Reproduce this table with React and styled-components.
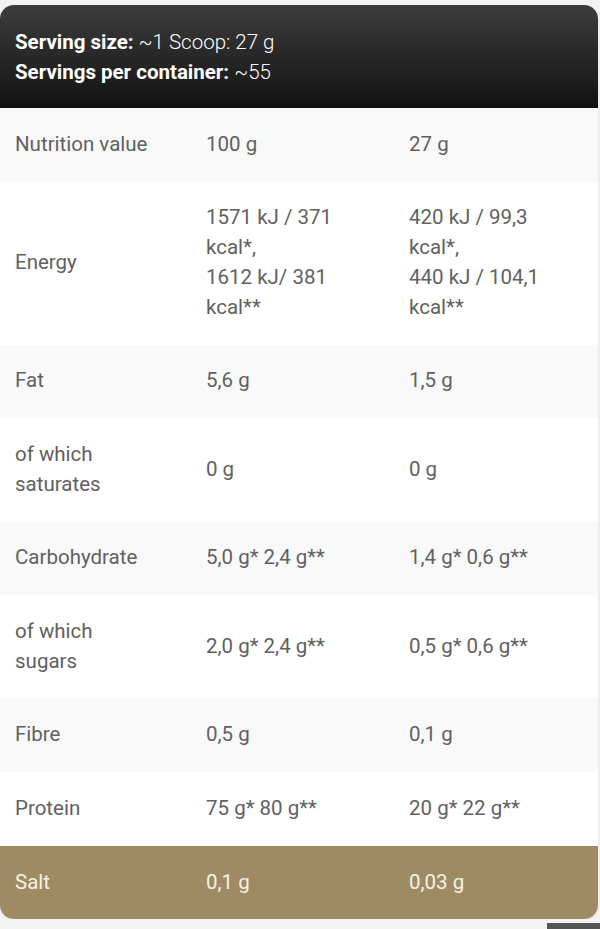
import React from "react";
import styled, { createGlobalStyle } from "styled-components";

const Global = createGlobalStyle`
  html, body { margin: 0; padding: 0; background: #f3f3f3; }
  body { font-family: Roboto, "Liberation Sans", sans-serif; }
`;

const Card = styled.div`
  margin: 5px 2px 0 0;
  border-radius: 14px;
  overflow: hidden;
  background: #fff;
  box-shadow: 0 1px 3px rgba(0,0,0,0.08);
`;

const Header = styled.div`
  background: linear-gradient(180deg, #3d3d3d 0%, #121212 100%);
  color: #fff;
  padding: 22px 15px 21px;
  font-size: 20.5px;
  font-weight: 300;
  line-height: 30px;
`;

const Line = styled.div`
  b { font-weight: 700; }
`;

const Row = styled.div`
  display: grid;
  grid-template-columns: 191px 203px 1fr;
  background: ${p => p.$variant === "salt" ? "#9e8b64" : p.$variant === "gray" ? "#f9f9f9" : "#ffffff"};
  color: ${p => p.$variant === "salt" ? "#f7f1e4" : "#616161"};
`;

const Cell = styled.div`
  display: flex;
  align-items: center;
  padding: 21.9px ${p => p.$pr}px 21.9px 15px;
  font-size: 20.5px;
  line-height: 29.8px;
`;

const Overlay = styled.div`
  position: fixed;
  right: 0;
  bottom: 0;
  width: 53px;
  height: 6px;
  background: #555;
`;

const rows = [
  ["Nutrition value", "100 g", "27 g"],
  ["Energy", <>1571 kJ / 371 kcal*,<br />1612 kJ/ 381 kcal**</>, <>420 kJ / 99,3 kcal*,<br />440 kJ / 104,1 kcal**</>],
  ["Fat", "5,6 g", "1,5 g"],
  ["of which saturates", "0 g", "0 g"],
  ["Carbohydrate", "5,0 g* 2,4 g**", "1,4 g* 0,6 g**"],
  ["of which sugars", "2,0 g* 2,4 g**", "0,5 g* 0,6 g**"],
  ["Fibre", "0,5 g", "0,1 g"],
  ["Protein", "75 g* 80 g**", "20 g* 22 g**"],
  ["Salt", "0,1 g", "0,03 g"],
];

export default function App() {
  return (
    <>
      <Global />
      <Card>
        <Header>
          <Line><b>Serving size:</b> ~1 Scoop: 27 g</Line>
          <Line><b>Servings per container:</b> ~55</Line>
        </Header>
        {rows.map((r, i) => (
          <Row key={i} $variant={i === rows.length - 1 ? "salt" : i % 2 === 0 ? "gray" : "white"}>
            <Cell $pr={38}><span>{r[0]}</span></Cell>
            <Cell $pr={43}><span>{r[1]}</span></Cell>
            <Cell $pr={42}><span>{r[2]}</span></Cell>
          </Row>
        ))}
      </Card>
      <Overlay />
    </>
  );
}
